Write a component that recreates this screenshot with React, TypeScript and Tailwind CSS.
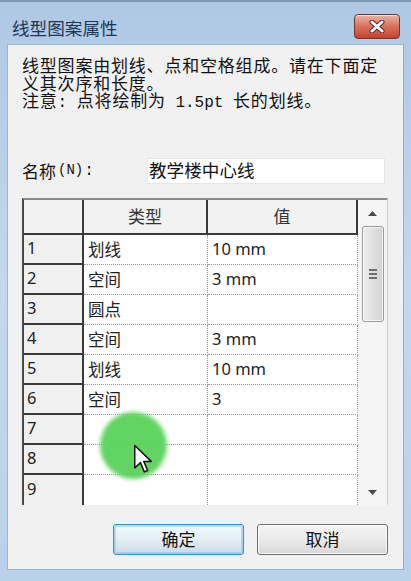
import React from "react";

const CJK = '"Noto Sans CJK SC", "Noto Sans", sans-serif';
const MONO = '"Liberation Mono", "Noto Sans CJK SC", monospace';
const UI = '"Noto Sans", "Noto Sans CJK SC", sans-serif';

const rows: [string, string, string][] = [
  ["1", "划线", "10 mm"],
  ["2", "空间", "3 mm"],
  ["3", "圆点", ""],
  ["4", "空间", "3 mm"],
  ["5", "划线", "10 mm"],
  ["6", "空间", "3"],
  ["7", "", ""],
  ["8", "", ""],
  ["9", "", ""],
];

export default function App() {
  return (
    <div className="relative w-[411px] h-[581px] overflow-hidden flex flex-col bg-gradient-to-b from-[#aec8e4] via-[#c3d8ee] to-[#b9d1ea]">
      {/* Title bar */}
      <div className="h-[44px] flex items-start justify-between pl-[12px] pr-[11px] border-t-2 border-t-[#7f98b3]">
        <div
          className="mt-[16px] text-[17.6px] leading-[20px] text-[#1d3656]"
          style={{ fontFamily: CJK }}
        >
          线型图案属性
        </div>
        <div className="mt-[12px] w-[46px] h-[25px] rounded-[4px] border border-[#6a3a33] bg-gradient-to-b from-[#eab3a3] via-[#d9705c] to-[#c4412f] flex items-center justify-center shadow-[inset_0_1px_0_rgba(255,255,255,0.5)]">
          <svg width="16" height="13" viewBox="0 0 16 13">
            <path d="M3 2 L13 11 M13 2 L3 11" stroke="#5a2a24" strokeWidth="5" strokeLinecap="round" />
            <path d="M3 2 L13 11 M13 2 L3 11" stroke="#ffffff" strokeWidth="3" strokeLinecap="round" />
          </svg>
        </div>
      </div>

      {/* Client area */}
      <div className="mx-[7px] h-[526px] bg-[#f1f1f1] border border-[#9db5cf] border-r-[#7fb2e6] flex flex-col pl-[14px]">
        <div
          className="pt-[11px] text-[17px] tracking-[0.8px] leading-[17.5px] text-[#111]"
          style={{ fontFamily: MONO }}
        >
          <div className="whitespace-nowrap" style={{ fontFamily: CJK }}>线型图案由划线、点和空格组成。请在下面定</div>
          <div className="whitespace-nowrap" style={{ fontFamily: CJK }}>义其次序和长度。</div>
          <div className="whitespace-nowrap">
            <span style={{ fontFamily: CJK }}>注意</span>
            <span className="text-[16px] tracking-[0px]">: </span>
            <span style={{ fontFamily: CJK }}>点将绘制为</span>
            <span className="text-[16px] tracking-[0px]"> 1.5pt </span>
            <span style={{ fontFamily: CJK }}>长的划线。</span>
          </div>
        </div>

        {/* Name row */}
        <div className="mt-[45px] h-[26px] flex items-center">
          <div className="w-[125px] flex items-center text-[17px] text-[#111] whitespace-nowrap">
            <span style={{ fontFamily: CJK }}>名称</span>
            <span className="text-[14px] ml-[2px]" style={{ fontFamily: MONO }}>(N)</span>
            <span className="text-[16px] ml-[1px]" style={{ fontFamily: MONO }}>:</span>
          </div>
          <div
            className="w-[238px] h-[26px] bg-white border border-[#e6e6e6] flex items-center pl-[1px] text-[17.6px] text-[#111]"
            style={{ fontFamily: CJK }}
          >
            教学楼中心线
          </div>
        </div>

        {/* Grid */}
        <div className="mt-[14px] w-[366px] h-[307px] flex border-t-2 border-t-[#8c8c8c] border-l-2 border-l-[#4a4a4a] border-r border-r-[#cfcfcf] bg-white">
          <div className="w-[334px] flex flex-col" style={{ fontFamily: UI }}>
            <div className="h-[35px] flex text-[17px] text-[#333]">
              <div className="w-[60px] bg-[#f2f2f2] border-r-2 border-r-[#3a3a3a] border-b-2 border-b-[#3a3a3a]" />
              <div
                className="w-[124px] bg-[#f2f2f2] border-r-2 border-r-[#3a3a3a] border-b-2 border-b-[#3a3a3a] flex items-center justify-center"
                style={{ fontFamily: CJK }}
              >
                类型
              </div>
              <div
                className="w-[150px] bg-[#f2f2f2] border-r-2 border-r-[#3a3a3a] border-b-2 border-b-[#3a3a3a] flex items-center justify-center"
                style={{ fontFamily: CJK }}
              >
                值
              </div>
            </div>
            {rows.map(([n, t, v], i) => (
              <div key={n} className="h-[30px] flex text-[16.5px] text-[#222]">
                <div
                  className={
                    "w-[60px] bg-[#f0f0f0] border-r-2 border-r-[#3a3a3a] pl-[3px] flex items-center " +
                    (i < 8 ? "border-b-2 border-b-[#3a3a3a]" : "")
                  }
                >
                  {n}
                </div>
                <div
                  className={
                    "w-[124px] pl-[4px] flex items-center border-r border-dotted border-r-[#999] " +
                    (i < 8 ? "border-b border-b-[#9a9a9a]" : "")
                  }
                  style={{ fontFamily: CJK }}
                >
                  {t}
                </div>
                <div
                  className={
                    "w-[150px] pl-[4px] flex items-center border-r border-dotted border-r-[#999] " +
                    (i < 8 ? "border-b border-b-[#9a9a9a]" : "")
                  }
                >
                  {v}
                </div>
              </div>
            ))}
          </div>
          {/* Scrollbar */}
          <div className="flex-1 bg-[#f5f5f5] flex flex-col items-center">
            <div className="h-[26px] w-full flex items-center justify-center pt-[2px]">
              <svg width="9" height="5" viewBox="0 0 9 5">
                <path d="M0 5 L4.5 0 L9 5 Z" fill="#4a4a4a" />
              </svg>
            </div>
            <div className="w-[22px] h-[96px] rounded-[3px] border border-[#9b9b9b] bg-gradient-to-r from-[#ececec] via-[#e0e0e0] to-[#d2d2d2] flex flex-col items-center justify-center gap-[2px] shadow-[inset_0_0_0_1px_rgba(255,255,255,0.7)]">
              <div className="w-[8px] h-[2px] bg-[#6e6e6e]" />
              <div className="w-[8px] h-[2px] bg-[#6e6e6e]" />
              <div className="w-[8px] h-[2px] bg-[#6e6e6e]" />
            </div>
            <div className="flex-1" />
            <div className="h-[24px] w-full flex items-center justify-center">
              <svg width="9" height="5" viewBox="0 0 9 5">
                <path d="M0 0 L4.5 5 L9 0 Z" fill="#4a4a4a" />
              </svg>
            </div>
          </div>
        </div>

        {/* Buttons */}
        <div className="mt-[19px] flex gap-[13px] pl-[91px]">
          <div
            className="w-[131px] h-[31px] rounded-[3px] border border-[#3c8ec4] bg-gradient-to-b from-[#f4f9fc] via-[#e3eef5] to-[#c9dbe6] shadow-[inset_0_0_0_2px_rgba(120,200,240,0.55)] flex items-center justify-center text-[17px] text-[#111]"
            style={{ fontFamily: CJK }}
          >
            确定
          </div>
          <div
            className="w-[131px] h-[31px] rounded-[3px] border border-[#707070] bg-gradient-to-b from-[#f4f4f4] via-[#ebebeb] to-[#d8d8d8] shadow-[inset_0_0_0_1px_rgba(255,255,255,0.8)] flex items-center justify-center text-[17px] text-[#111]"
            style={{ fontFamily: CJK }}
          >
            取消
          </div>
        </div>
      </div>
      <div className="flex-1" />

      {/* Cursor highlight overlay */}
      <div className="absolute left-[100px] top-[412px] w-[67px] h-[67px] rounded-full bg-[#5ad25a] blur-[2px] opacity-95" />
      <svg className="absolute left-[133px] top-[444px]" width="20" height="30" viewBox="0 0 13 20">
        <path
          d="M1 1 L1 16 L4.8 12.4 L7.4 18.6 L9.6 17.7 L7 11.6 L12 11.6 Z"
          fill="#ffffff"
          stroke="#111"
          strokeWidth="1"
          strokeLinejoin="round"
        />
      </svg>
    </div>
  );
}
